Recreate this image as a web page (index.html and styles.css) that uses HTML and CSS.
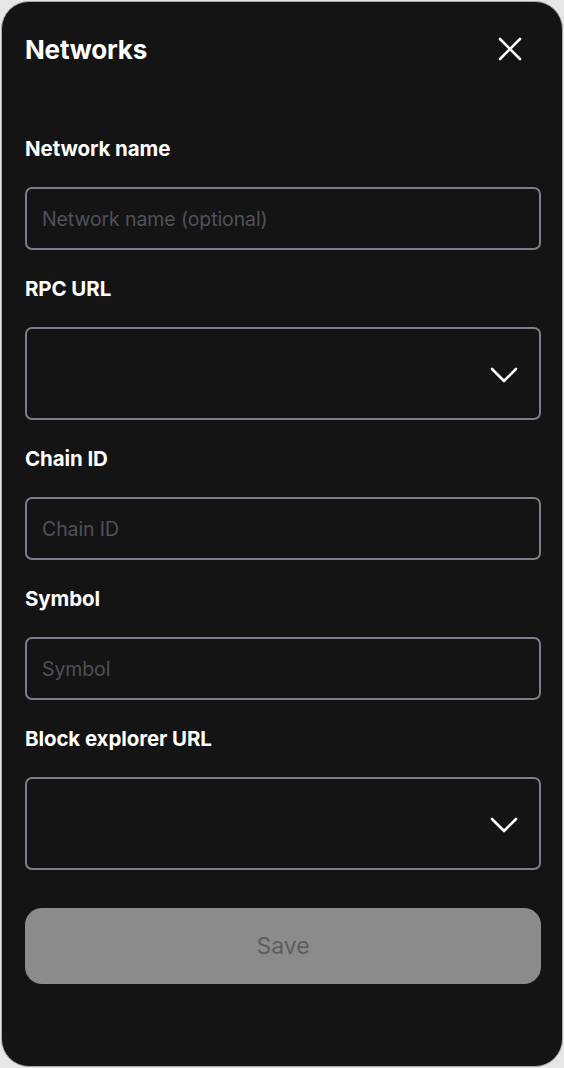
FILE: index.html
```html
<!DOCTYPE html>
<html lang="en">
<head>
<meta charset="utf-8">
<title>Networks</title>
<link rel="stylesheet" href="styles.css">
</head>
<body>
<div class="card">
  <header class="head">
    <h1 class="title">Networks</h1>
    <button class="close" aria-label="Close">
      <svg width="24" height="24" viewBox="0 0 24 24"><path d="M2 2 L22 22 M22 2 L2 22" stroke="#fff" stroke-width="2.6" stroke-linecap="round" fill="none"/></svg>
    </button>
  </header>
  <form class="form">
    <div class="field">
      <label class="label">Network name</label>
      <div class="input"><span class="ph">Network name (optional)</span></div>
    </div>
    <div class="field">
      <label class="label">RPC URL</label>
      <div class="input select">
        <svg class="chev" width="28" height="16" viewBox="0 0 28 16"><path d="M2 2 L14 14 L26 2" stroke="#fff" stroke-width="2.6" stroke-linecap="round" stroke-linejoin="round" fill="none"/></svg>
      </div>
    </div>
    <div class="field">
      <label class="label">Chain ID</label>
      <div class="input"><span class="ph">Chain ID</span></div>
    </div>
    <div class="field">
      <label class="label">Symbol</label>
      <div class="input"><span class="ph">Symbol</span></div>
    </div>
    <div class="field">
      <label class="label">Block explorer URL</label>
      <div class="input select">
        <svg class="chev" width="28" height="16" viewBox="0 0 28 16"><path d="M2 2 L14 14 L26 2" stroke="#fff" stroke-width="2.6" stroke-linecap="round" stroke-linejoin="round" fill="none"/></svg>
      </div>
    </div>
    <button type="button" class="save">Save</button>
  </form>
</div>
</body>
</html>
```
FILE: styles.css
```css
* { box-sizing: border-box; }
html, body { margin: 0; padding: 0; }
body {
  background: #e6e6e6;
  font-family: Inter, "Liberation Sans", sans-serif;
  width: 564px;
  height: 1068px;
  padding: 1px;
}
.card {
  width: 562px;
  height: 1066px;
  background: #141414;
  border: 1px solid #a9a9a9;
  border-radius: 28px;
  padding: 0 21px 0 23px;
}
.head {
  display: flex;
  align-items: center;
  justify-content: space-between;
  height: 94px;
  padding-top: 0;
}
.title {
  margin: 0;
  color: #fff;
  font-size: 26px;
  font-weight: 700;
  letter-spacing: -0.2px;
}
.close {
  background: none;
  border: 0;
  padding: 0;
  margin-right: 19px;
  width: 24px;
  height: 24px;
  display: flex;
}
.form {
  display: flex;
  flex-direction: column;
  padding-top: 41px;
}
.field {
  display: flex;
  flex-direction: column;
  margin-bottom: 27px;
}
.label {
  color: #fff;
  font-size: 20.5px;
  font-weight: 700;
  line-height: 24px;
  margin-bottom: 26px;
  letter-spacing: -0.1px;
}
.input {
  height: 63px;
  border: 2px solid #7b7f8b;
  border-radius: 7px;
  display: flex;
  align-items: center;
  padding: 0 17px 0 15px;
}
.ph {
  color: #4d525c;
  font-size: 19.5px;
  letter-spacing: -0.1px;
}
.select {
  height: 93px;
  justify-content: flex-end;
  padding-right: 21px;
  padding-top: 2px;
}
.save {
  margin-top: 11px;
  height: 76px;
  border: 0;
  border-radius: 17px;
  background: #8b8b8b;
  color: #5d5d5d;
  font-family: Inter, "Liberation Sans", sans-serif;
  font-size: 23px;
  font-weight: 400;
}
```
